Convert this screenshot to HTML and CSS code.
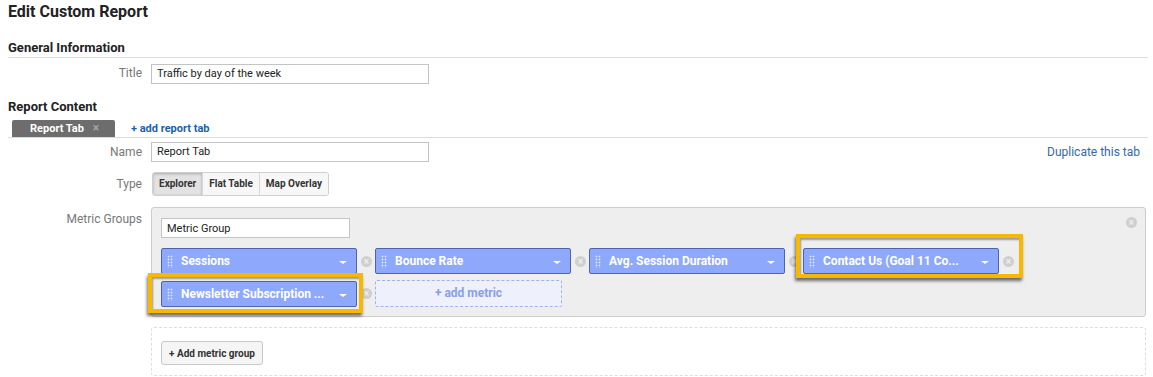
FILE: index.html
```html
<!DOCTYPE html>
<html lang="en">

<head>
  <meta charset="UTF-8" />
  <meta name="viewport" content="width=device-width, initial-scale=1.0" />
  <title>Edit Custom Report</title>
  <link rel="stylesheet" href="styles.css">
</head>

<body>
  <h1 class="page-title">Edit Custom Report</h1>

  <section class="section">
    <h2 class="section-title ruled">General Information</h2>
    <div class="row first-row">
      <label class="row-label" for="title">Title</label>
      <div class="row-field">
        <input class="text-input" id="title" type="text" value="Traffic by day of the week">
      </div>
    </div>
  </section>

  <section class="section">
    <h2 class="section-title content-title">Report Content</h2>
    <div class="tab-bar">
      <span class="tab">Report Tab <span class="tab-close">&times;</span></span>
      <a class="add-tab" href="#">+ add report tab</a>
    </div>

    <div class="row name-row">
      <label class="row-label" for="tab-name">Name</label>
      <div class="row-field spread">
        <input class="text-input" id="tab-name" type="text" value="Report Tab">
        <a class="duplicate" href="#">Duplicate this tab</a>
      </div>
    </div>

    <div class="row type-row">
      <span class="row-label">Type</span>
      <div class="row-field">
        <div class="type-group">
          <button class="type-btn active" type="button">Explorer</button>
          <button class="type-btn" type="button">Flat Table</button>
          <button class="type-btn" type="button">Map Overlay</button>
        </div>
      </div>
    </div>

    <div class="row groups-row">
      <span class="row-label">Metric Groups</span>
      <div class="row-field">
        <div class="metric-group">
          <span class="group-remove"></span>
          <input class="text-input group-name" type="text" value="Metric Group">
          <div class="metric-list">
            <div class="metric-slot">
              <div class="metric-chip"><span class="grip"></span><span class="metric-name">Sessions</span><span class="caret"></span></div>
              <span class="remove-dot"></span>
            </div>
            <div class="metric-slot">
              <div class="metric-chip"><span class="grip"></span><span class="metric-name">Bounce Rate</span><span class="caret"></span></div>
              <span class="remove-dot"></span>
            </div>
            <div class="metric-slot">
              <div class="metric-chip"><span class="grip"></span><span class="metric-name">Avg. Session Duration</span><span class="caret"></span></div>
              <span class="remove-dot"></span>
            </div>
            <div class="metric-slot">
              <div class="metric-chip"><span class="grip"></span><span class="metric-name">Contact Us (Goal 11 Co...</span><span class="caret"></span></div>
              <span class="remove-dot"></span>
              <span class="highlight contact-mark"></span>
            </div>
            <div class="metric-slot">
              <div class="metric-chip"><span class="grip"></span><span class="metric-name">Newsletter Subscription ...</span><span class="caret"></span></div>
              <span class="remove-dot"></span>
              <span class="highlight newsletter-mark"></span>
            </div>
            <div class="metric-slot">
              <div class="add-metric">+ add metric</div>
            </div>
          </div>
        </div>
      </div>
    </div>

    <div class="row add-group-row">
      <span class="row-label"></span>
      <div class="row-field">
        <div class="add-group-box">
          <button class="add-group-btn" type="button">+ Add metric group</button>
        </div>
      </div>
    </div>
  </section>
</body>

</html>
```

FILE: styles.css
```css
* {
  padding: 0;
  margin: 0;
  box-sizing: border-box;
  font-family: Roboto, "Liberation Sans", Arial, sans-serif;
}

body {
  background: #fff;
  color: #222;
  padding: 2px 5px 0 8px;
}

.page-title {
  font-size: 16px;
  line-height: 20px;
  font-weight: 700;
  color: #222;
}

.section-title {
  font-size: 13px;
  line-height: 18px;
  font-weight: 700;
  color: #222;
}

.ruled {
  margin-top: 17px;
  border-bottom: 1px solid #dcdcdc;
}

.content-title {
  margin-top: 14px;
}

.row {
  display: grid;
  grid-template-columns: 134px 1fr;
  column-gap: 9px;
  align-items: center;
}

.row-label {
  text-align: right;
  font-size: 12px;
  color: #777;
}

.first-row {
  margin-top: 4px;
}

.text-input {
  width: 278px;
  height: 20px;
  border: 1px solid #c4c4c4;
  padding: 0 5px;
  font-size: 11px;
  color: #222;
  background: #fff;
}

.text-input:focus {
  outline: none;
}

/* tabs */
.tab-bar {
  display: flex;
  align-items: flex-end;
  margin-top: 4px;
  padding-left: 4px;
  border-bottom: 1px solid #dcdcdc;
}

.tab {
  width: 103px;
  height: 17px;
  background: #6d6d6d;
  color: #fff;
  font-size: 11px;
  font-weight: 700;
  line-height: 17px;
  padding-left: 18px;
  border-radius: 2px 2px 0 0;
}

.tab-close {
  color: #a5a5a5;
  font-size: 12px;
  margin-left: 6px;
}

.add-tab {
  margin-left: 16px;
  margin-bottom: 2px;
  font-size: 11px;
  font-weight: 700;
  color: #1c5fae;
  text-decoration: none;
}

.name-row {
  margin-top: 4px;
}

.spread {
  display: flex;
  justify-content: space-between;
  align-items: center;
  padding-right: 8px;
}

.duplicate {
  font-size: 12px;
  color: #2d6aaf;
  text-decoration: none;
}

/* type switch */
.type-row {
  margin-top: 10px;
}

.type-group {
  display: inline-flex;
  border: 1px solid #cfcfcf;
  border-radius: 3px;
  overflow: hidden;
  margin-left: 1px;
}

.type-btn {
  height: 22px;
  padding: 0 6px;
  border: 0;
  border-left: 1px solid #d6d6d6;
  background: #f7f7f7;
  font-size: 10px;
  font-weight: 700;
  color: #333;
}

.type-btn:first-child {
  border-left: 0;
}

.type-btn.active {
  background: #e2e2e2;
  box-shadow: inset 0 1px 3px rgba(0, 0, 0, 0.25);
}

/* metric groups */
.groups-row {
  margin-top: 11px;
  align-items: start;
}

.groups-row .row-label {
  padding-top: 5px;
}

.metric-group {
  position: relative;
  margin-right: 2px;
  background: #eeeeee;
  border: 1px solid #cccccc;
  border-radius: 3px;
  padding: 9px 9px 9px 9px;
}

.group-name {
  width: 189px;
}

.group-remove {
  position: absolute;
  top: 9px;
  right: 8px;
  width: 11px;
  height: 11px;
  border-radius: 50%;
  background: #cfcfcf;
}

.group-remove::before,
.remove-dot::before {
  content: "×";
  display: block;
  text-align: center;
  font-size: 10px;
  line-height: 11px;
  color: #eee;
  font-weight: 700;
}

.metric-list {
  display: flex;
  flex-wrap: wrap;
  row-gap: 6px;
  margin-top: 10px;
}

.metric-slot {
  position: relative;
  display: flex;
  align-items: center;
  width: 214px;
}

.metric-chip {
  position: relative;
  display: flex;
  align-items: center;
  width: 196px;
  height: 26px;
  background: #8ea8fb;
  border: 1px solid #4f63ab;
  border-radius: 2px;
  padding-left: 19px;
}

.grip {
  position: absolute;
  left: 5px;
  top: 6px;
  width: 6px;
  height: 13px;
  background-image: radial-gradient(circle, rgba(255, 255, 255, 0.75) 0.8px, transparent 1.1px);
  background-size: 3px 3px;
}

.metric-name {
  font-size: 12px;
  font-weight: 700;
  color: #fff;
  white-space: nowrap;
}

.caret {
  position: absolute;
  right: 9px;
  top: 12px;
  width: 0;
  height: 0;
  border-left: 4px solid transparent;
  border-right: 4px solid transparent;
  border-top: 3px solid #fff;
}

.remove-dot {
  width: 11px;
  height: 11px;
  margin-left: 4px;
  border-radius: 50%;
  background: #cfcfcf;
}

.add-metric {
  width: 187px;
  height: 27px;
  border: 1px dashed #9fb2ee;
  border-radius: 2px;
  background: #eef1fb;
  color: #8a9fe6;
  font-size: 12px;
  font-weight: 700;
  text-align: center;
  line-height: 25px;
}

/* annotation boxes */
.highlight {
  position: absolute;
  border: 4px solid #f8b800;
  box-shadow: -1px 3px 3px rgba(0, 0, 0, 0.55), inset 1px 2px 2px rgba(0, 0, 0, 0.35);
  pointer-events: none;
}

.contact-mark {
  left: -7px;
  top: -14px;
  width: 227px;
  height: 44px;
}

.newsletter-mark {
  left: -13px;
  top: -7px;
  width: 215px;
  height: 40px;
}

/* add group */
.add-group-row {
  margin-top: 10px;
}

.add-group-box {
  margin-right: 2px;
  height: 49px;
  border: 1px dashed #dddddd;
  border-radius: 3px;
  padding: 13px 9px 0 9px;
}

.add-group-btn {
  height: 24px;
  padding: 0 7px;
  background: #f5f5f5;
  border: 1px solid #c8c8c8;
  border-radius: 3px;
  font-size: 10px;
  font-weight: 700;
  color: #333;
}
```
